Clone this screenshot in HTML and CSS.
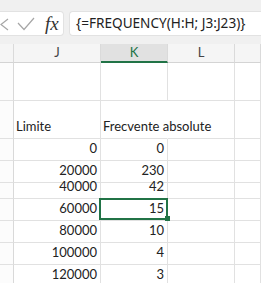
FILE: index.html
```html
<!DOCTYPE html>
<html lang="ro">
<head>
    <meta charset="UTF-8">
    <title>FREQUENCY</title>
    <link rel="stylesheet" href="styles.css">
</head>
<body>
    <div class="formulaBar">
        <div class="fxBox">
            <svg class="cancel" width="9" height="14" viewBox="0 0 9 14">
                <polyline points="8,1 1,6.5 8,12" fill="none" stroke="#a6a6a6" stroke-width="1.2"/>
            </svg>
            <svg class="enter" width="18" height="14" viewBox="0 0 18 14">
                <polyline points="1,6 7,12.5 17,1" fill="none" stroke="#a6a6a6" stroke-width="1.2"/>
            </svg>
            <span class="fx">fx</span>
        </div>
        <div class="formula">{=FREQUENCY(H:H; J3:J23)}</div>
    </div>

    <div class="sheet">
        <div class="hd"></div>
        <div class="hd">J</div>
        <div class="hd active">K</div>
        <div class="hd">L</div>
        <div class="hd"></div>

        <div class="rh tall"></div><div class="c"></div><div class="c"></div><div class="c"></div><div class="c"></div>

        <div class="rh tall"></div>
        <div class="c txt">Limite</div>
        <div class="c txt spill">Frecvente absolute</div>
        <div class="c"></div>
        <div class="c"></div>

        <div class="rh"></div><div class="c num">0</div><div class="c num">0</div><div class="c"></div><div class="c"></div>
        <div class="rh"></div><div class="c num">20000</div><div class="c num">230</div><div class="c"></div><div class="c"></div>
        <div class="rh short"></div><div class="c num">40000</div><div class="c num">42</div><div class="c"></div><div class="c"></div>
        <div class="rh"></div><div class="c num">60000</div><div class="c num selected">15<span class="handle"></span></div><div class="c"></div><div class="c"></div>
        <div class="rh"></div><div class="c num">80000</div><div class="c num">10</div><div class="c"></div><div class="c"></div>
        <div class="rh"></div><div class="c num">100000</div><div class="c num">4</div><div class="c"></div><div class="c"></div>
        <div class="rh"></div><div class="c num">120000</div><div class="c num">3</div><div class="c"></div><div class="c"></div>
    </div>
</body>
</html>
```

FILE: styles.css
```css
*{
    margin: 0;
    padding: 0;
    box-sizing: border-box;
}
body{
    width: 261px;
    height: 283px;
    overflow: hidden;
    background: #fff;
    font-family: Lato, "Liberation Sans", sans-serif;
}
.formulaBar{
    display: flex;
    height: 44px;
    padding-top: 11px;
    background: #f0f0f0;
    overflow: hidden;
}
.fxBox{
    display: flex;
    align-items: center;
    width: 64px;
    height: 25px;
    background: #fff;
    border: 1px solid #e2e2e2;
    border-left: none;
    border-radius: 0 4px 4px 0;
}
.cancel{
    margin-top: 2px;
}
.enter{
    margin-left: 8px;
    margin-top: 1px;
}
.fx{
    margin-left: 10px;
    font-family: "Liberation Serif", serif;
    font-style: italic;
    font-size: 19px;
    color: #333;
    line-height: 20px;
}
.formula{
    flex: 1;
    height: 25px;
    margin-left: 5px;
    padding-left: 6px;
    background: #fff;
    border: 1px solid #e2e2e2;
    border-right: none;
    border-radius: 4px 0 0 4px;
    font-family: "Noto Sans", sans-serif;
    font-size: 13.6px;
    line-height: 22px;
    color: #222;
    white-space: nowrap;
    overflow: hidden;
}
.sheet{
    display: grid;
    grid-template-columns: 14px 87px 67px 67px 1fr;
    grid-template-rows: 19px 38px 38px 22px 22px 16px 22px 22px 22px 22px;
}
.hd{
    background: #f5f5f5;
    border-right: 1px solid #dadada;
    border-bottom: 1px solid #d4d4d4;
    text-align: center;
    font-size: 13px;
    line-height: 17px;
    color: #444;
}
.hd.active{
    background: #e1e1e1;
    color: #217346;
    border-bottom: 2px solid #217346;
}
.rh{
    background: #fcfcfc;
    border-right: 1px solid #d9d9d9;
    border-bottom: 1px solid #e1e1e1;
}
.c{
    display: flex;
    align-items: flex-end;
    padding: 0 3px 4px 2px;
    border-right: 1px solid #e1e1e1;
    border-bottom: 1px solid #e1e1e1;
    font-size: 13px;
    line-height: 15px;
    color: #222;
    white-space: nowrap;
}
.num{
    justify-content: flex-end;
}
.spill{
    border-right-color: transparent;
}
.selected{
    position: relative;
}
.selected::after{
    content: "";
    position: absolute;
    top: -1px;
    left: -2px;
    right: -1px;
    bottom: 0;
    border: 2px solid #217346;
    z-index: 1;
}
.handle{
    position: absolute;
    right: -3px;
    bottom: -1px;
    width: 5px;
    height: 5px;
    background: #217346;
    z-index: 2;
}
```
